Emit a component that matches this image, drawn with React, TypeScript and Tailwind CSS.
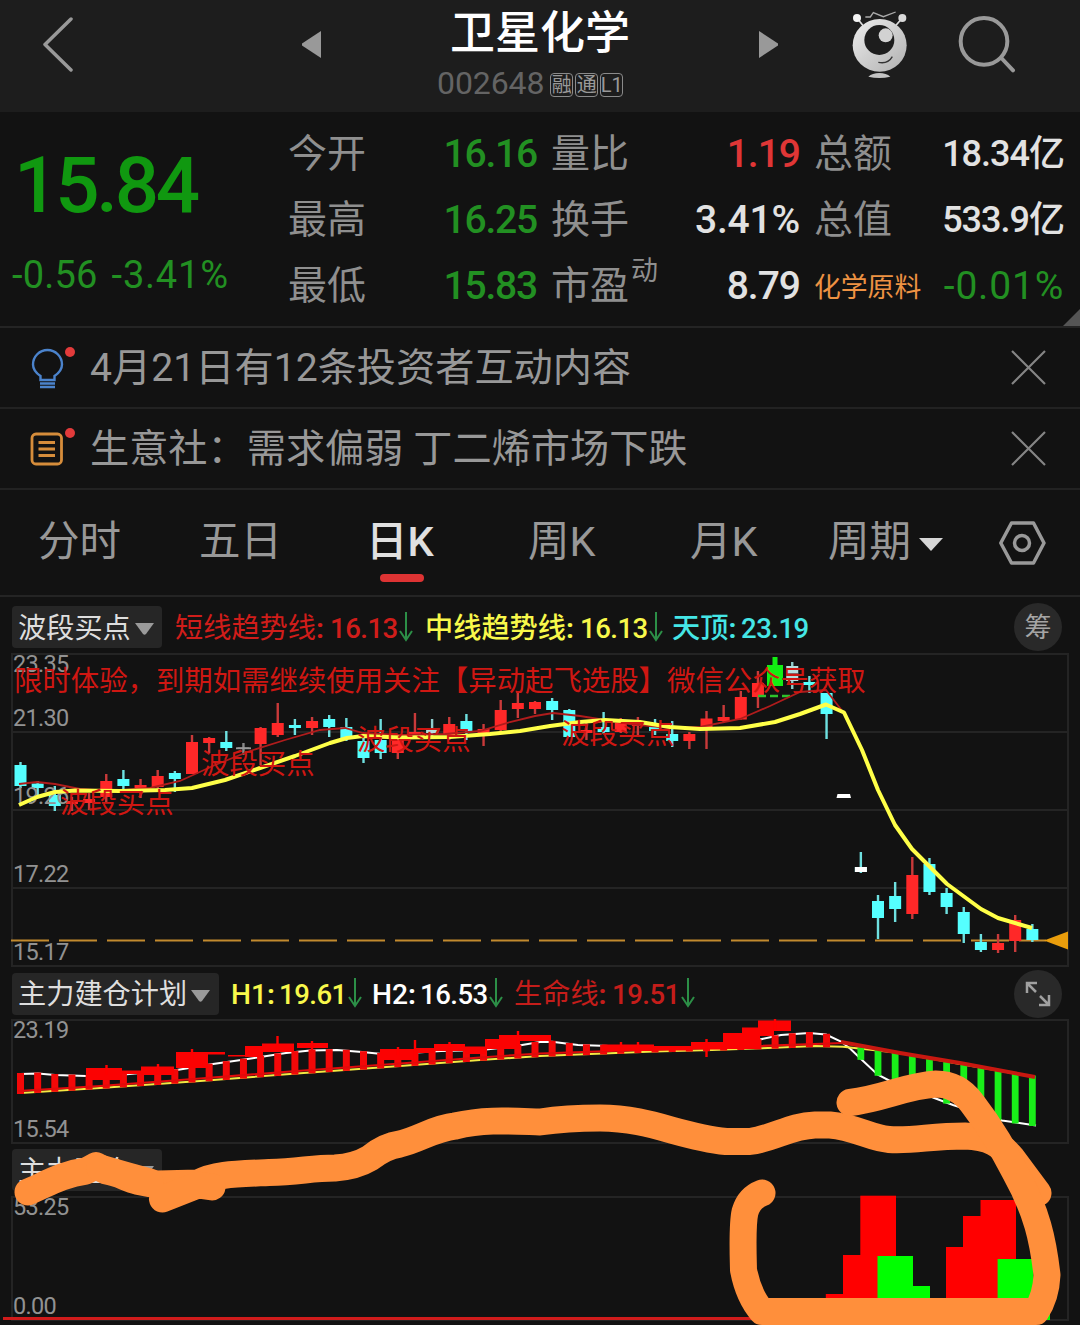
import React from "react";

type Pt = [number, number];
type Kind = "c" | "r" | "w" | "x";
type Candle = [Kind, number, number, number, number];

const STEP = 17.15;
const X0 = 20.5;

// kind, high, body top, body bottom, low
const candles: Candle[] = [
  ["c", 762, 765, 786, 788], ["c", 781, 783.5, 788, 795], ["c", 786, 795, 806, 811],
  ["r", 797, 801, 804, 811], ["r", 793, 799, 803, 810], ["r", 774, 781, 797, 802],
  ["c", 770, 779, 786, 789], ["r", 779, 785, 788, 798], ["r", 770, 776, 787, 789],
  ["c", 771, 773, 779, 792], ["r", 735, 742, 774, 774], ["r", 737, 738, 743, 753],
  ["c", 731, 742, 748, 751], ["x", 743, 747.4, 749, 755], ["r", 727, 728, 744, 765],
  ["r", 703, 723, 735, 737], ["c", 719, 725, 728, 735], ["r", 717, 721, 728, 735],
  ["c", 715, 719, 727, 737], ["c", 718, 727, 738, 741], ["c", 738, 741, 758, 763],
  ["c", 719, 740, 753, 759], ["r", 735, 740, 753, 759], ["r", 713, 732, 734, 737],
  ["w", 719, 729, 733, 737], ["r", 717, 724, 735, 740], ["c", 714, 721, 731, 740],
  ["r", 724, 729, 733, 746], ["r", 700, 710, 730, 732], ["r", 692, 703, 709, 718],
  ["r", 701, 702, 709, 714], ["c", 698, 701, 710, 720], ["c", 709, 710, 737, 737],
  ["r", 722, 730, 733, 740], ["c", 712, 727, 732, 734], ["r", 718, 723, 732, 733],
  ["r", 717, 723, 726, 737], ["c", 719, 727, 731, 735], ["c", 721, 734, 741, 747],
  ["r", 732, 734, 741, 749], ["r", 711, 718.5, 727, 749], ["r", 705, 717, 721, 723],
  ["r", 691, 697, 719.5, 719.5], ["r", 671, 683, 697, 708], ["x", 690, 690, 690, 690],
  ["w", 662, 666, 681, 689], ["c", 676, 682, 685, 693], ["c", 693, 693, 714, 739],
  ["x", 796, 796, 796, 796], ["c", 852, 867, 872, 873], ["c", 895, 901, 918, 939],
  ["c", 882, 896, 909, 922], ["r", 857, 875, 914, 919], ["c", 858, 864, 892, 895],
  ["c", 888, 893, 907, 914], ["c", 907, 912, 934, 943], ["c", 934, 942, 950, 952],
  ["r", 934, 943, 950, 953], ["r", 915, 920, 941, 952], ["c", 924, 929, 940, 942],
];

const bodyColor: Record<Kind, string> = { c: "#55ffff", r: "#ff2828", w: "#b5dede", x: "#999" };
const wickColor: Record<Kind, string> = { c: "#6ee0e0", r: "#c93a3a", w: "#8ecccc", x: "#888" };

const yellowLine = "19,805 37,797 55,792 75,790.5 120,791 165,790 192,788 225,780 260,768 295,756 330,743 347,738 363,736 400,737.5 450,737 490,734 520,731 550,726 580,722 605,720 640,722 670,727 700,729 740,728 775,722 800,714 826,704.5 844,712.5 862,750 878,790 895,825 912,849 930,867 947,884 981,909 998,918 1032,928";
const redLine = "19,784 37,782 55,784 80,789 110,791 150,788 180,781 215,765 250,751 285,740 320,730 345,728 363,733 400,735 445,734 480,731 510,722 535,716 553,713 580,716 630,724 670,728 700,727 740,719 770,706 800,692 826,690 843,712";

const upper: Pt[] = [
  [20.5, 1074], [38, 1073.5], [55, 1075], [86, 1076], [124, 1074.5], [151, 1072], [177, 1070], [213, 1064],
  [241, 1060], [286, 1053], [310, 1050.5], [337, 1050], [362, 1052], [382, 1054], [417, 1052.5], [441, 1051],
  [482, 1050], [516, 1046], [540, 1042], [552, 1041.7], [578, 1045], [609, 1046], [654, 1047.3], [719, 1047.3],
  [743, 1045], [760, 1039.5], [781, 1035], [809, 1033], [826, 1034.5], [841, 1041.5], [850, 1048.5], [861, 1059],
  [877.5, 1074.5], [891, 1081.5], [912, 1088], [933, 1097.5], [953, 1105], [1002, 1120.5], [1036, 1125.5],
];
const lower: Pt[] = [
  [20.5, 1093], [100, 1088], [200, 1081], [290, 1074], [400, 1066], [480, 1060], [540, 1056], [654, 1051.5],
  [712, 1050], [760, 1048.3], [815, 1046], [843, 1046.7], [900, 1053], [960, 1064], [1035, 1077],
];
const redTrend: Pt[] = [[841, 1042], [900, 1053], [960, 1063], [1035, 1077]];

function valueAt(line: Pt[], x: number): number {
  for (let i = 1; i < line.length; i++) {
    const [ax, ay] = line[i - 1];
    const [bx, by] = line[i];
    if (x <= bx) return ay + ((by - ay) * (x - ax)) / (bx - ax);
  }
  return line[line.length - 1][1];
}

const pts = (line: Pt[]) => line.map((p) => p.join(",")).join(" ");

// left, right, top, bottom
const redBlocks: [number, number, number, number][] = [
  [86, 122, 1068, 1080], [122, 142, 1070.5, 1074], [141, 174, 1066.5, 1075], [176, 208, 1052, 1068],
  [207, 225, 1052, 1054.5], [228, 246, 1055, 1056.5], [245, 263, 1046, 1057], [262, 294, 1043.5, 1052],
  [297, 328, 1043, 1048], [380, 418, 1049, 1060], [416, 434, 1048, 1053], [434, 465, 1044, 1051], [465, 486, 1046.5, 1054],
  [485, 520, 1039, 1049], [499, 551, 1035, 1041], [602, 654, 1044.5, 1051], [654, 692, 1046, 1050.5],
  [691, 723, 1042, 1049.5], [723, 760, 1033, 1049], [742, 760, 1027.5, 1041], [758, 791, 1020.5, 1031],
  [745, 774, 1028, 1036],
];
const spikes: [number, number, number][] = [
  [106.5, 1065, 1075], [158, 1064, 1072], [192, 1049, 1060], [277.5, 1036, 1050], [312, 1041, 1050], [398, 1047, 1055],
  [415, 1040, 1062], [449.5, 1042, 1050], [518, 1031, 1046], [621, 1042, 1048], [638, 1042, 1048],
  [706.5, 1039, 1057], [775, 1019, 1030],
];

const volumeBars: [number, number, number, string][] = [
  [825.8, 843.5, 1294, "#f00"], [843, 861, 1255, "#f00"], [860.3, 896, 1195.7, "#f00"],
  [877.5, 913, 1256, "#0f0"], [912.5, 930, 1286, "#0f0"], [946, 964, 1247, "#f00"],
  [963, 981, 1216, "#f00"], [980.5, 1016, 1200, "#f00"], [997.6, 1050, 1259, "#0f0"],
];

const FONT = "font-['Roboto','Noto_Sans_CJK_SC',sans-serif]";

function Down() {
  return (
    <svg className="block shrink-0" width="14" height="30" viewBox="0 0 14 30" fill="none" stroke="#2c8f47" strokeWidth="2">
      <path d="M7 0V28M1 19L7 28L13 19" />
    </svg>
  );
}

function Picker({ label, width }: { label: string; width: string }) {
  return (
    <div className={`flex h-[42px] shrink-0 items-center rounded bg-[#262626] pl-1.5 text-[28.2px] leading-none text-[#dedede] ${width}`}>
      <span className="whitespace-nowrap pt-1">{label}</span>
      <svg className="ml-1 mt-1 shrink-0" width="19" height="12" viewBox="0 0 19 12"><path d="M0 0H19L11 11Q9.500 12.500 8 11Z" fill="#9a9a9a" /></svg>
    </div>
  );
}

function Reading({ label, labelWidth, value, cell, arrow }: { label: string; labelWidth: string; value: string; cell: string; arrow: boolean }) {
  return (
    <div className={`flex shrink-0 items-center whitespace-nowrap text-[28.2px] leading-none ${cell}`}>
      <span className={`pt-1 ${labelWidth}`}>{label}<b className="font-bold">:</b></span>
      <span className="mr-px pt-[3px] text-[27.500px] font-medium tracking-[-0.5px]">{value}</span>
      {arrow && <Down />}
    </div>
  );
}

function Stat({ label, value, color, sup }: { label: string; value: string; color: string; sup?: string }) {
  return (
    <div className="flex h-[66px] items-center justify-between whitespace-nowrap text-[39px] leading-none">
      <span className="-ml-px text-[#8f8f8f]">
        {label}
        {sup && <span className="relative -top-[19px] ml-0.5 text-[27px]">{sup}</span>}
      </span>
      <span className={color}>{value}</span>
    </div>
  );
}

function Notice({ children, text }: { children: React.ReactNode; text: string }) {
  return (
    <div className="flex h-[81px] items-center border-b-2 border-[#222] pl-[28px] pr-[34px]">
      {children}
      <span className="ml-[14px] grow whitespace-pre pt-0.5 text-[39.200px] leading-none text-[#989898]">{text}</span>
      <svg width="35" height="35" viewBox="0 0 35 35" stroke="#858585" strokeWidth="2.2"><path d="M1 1L34 34M34 1L1 34" /></svg>
    </div>
  );
}

function AxisText({ y, children }: { y: number; children: string }) {
  return <text x="13" y={y} fill="#929292" fontSize="23.500" letterSpacing="-0.7">{children}</text>;
}

function PriceChart() {
  return (
    <svg className="block shrink-0 overflow-visible" width="1080" height="315" viewBox="0 653 1080 315">
      <g stroke="#242424" strokeWidth="2" fill="none">
        <path d="M12 654H1068V966H12ZM12 732H1068M12 810H1068M12 888H1068" />
      </g>
      <path d="M11 940.500H1046" stroke="#c28a2e" strokeWidth="2" strokeDasharray="38 10" />
      {candles.map(([k, hi, top, bot, lo], i) => {
        const x = X0 + STEP * i;
        return (
          <g key={i}>
            <rect x={x - 1.2} y={hi} width="2.400" height={lo - hi} fill={wickColor[k]} />
            <rect x={x - 6} y={top} width="12" height={bot - top} fill={bodyColor[k]} />
          </g>
        );
      })}
      <path d="M236 748.300H251" stroke="#999" strokeWidth="1.800" />
      <path d="M772.500 657H777.500V665H783V686H767V665H772.500Z" fill="#12ee12" />
      <path d="M837.500 794H850L851 798H836.500Z" fill="#fff" />
      <rect x="854.900" y="867" width="12" height="5" fill="#fff" />
      <path d="M758 696H790" stroke="#2cc42c" strokeWidth="2.500" strokeDasharray="8 4" />
      <path d="M787 669H798M787 674H798" stroke="#7a3a3a" strokeWidth="1.500" />
      <AxisText y={672}>23.35</AxisText>
      <AxisText y={726}>21.30</AxisText>
      <AxisText y={804}>19.26</AxisText>
      <AxisText y={882}>17.22</AxisText>
      <AxisText y={960}>15.17</AxisText>
      <polyline points={redLine} fill="none" stroke="#b01c1c" strokeWidth="1.800" />
      <polyline points={yellowLine} fill="none" stroke="#ffff48" strokeWidth="4" strokeLinejoin="round" />
      <path d="M1044 940.500L1068 931.500V949.500Z" fill="#e99d0c" />
      <g fill="#cf1712" fontSize="28.400">
        <text x="14" y="690.500">限时体验，到期如需继续使用关注【异动起飞选股】微信公众号获取</text>
        <text x="60" y="812.500">波段买点</text>
        <text x="201" y="773.500">波段买点</text>
        <text x="357" y="749.500">波段买点</text>
        <text x="561" y="743.500">波段买点</text>
      </g>
    </svg>
  );
}

function PlanChart() {
  const idx = Array.from({ length: 60 }, (_, i) => i);
  return (
    <svg className="block shrink-0 overflow-visible" width="1080" height="126" viewBox="0 1019 1080 126">
      <path d="M12 1020H1068V1143H12Z" stroke="#242424" strokeWidth="2" fill="none" />
      <polyline points={pts(upper)} fill="none" stroke="#fff" strokeWidth="2" />
      <polyline points={pts(lower)} fill="none" stroke="#f4e842" strokeWidth="2" />
      {idx.map((i) => {
        const x = X0 + STEP * i;
        const a = valueAt(upper, x);
        const b = valueAt(lower, x);
        if (i === 48) return null;
        return i < 48 ? (
          <rect key={i} x={x - 3.5} y={a - 1} width="7" height={b - a + 2} fill="#f30808" />
        ) : (
          <rect key={i} x={x - 3.4} y={b - 1} width="6.800" height={a - b + 2} fill="#19ee19" />
        );
      })}
      <polyline points="18,1091 100,1086 200,1078.500 290,1071.500 400,1063.500 480,1057.500 540,1053.500 654,1049.500 760,1046 843,1043" fill="none" stroke="#e00b0b" strokeWidth="2.200" />
      {redBlocks.map(([l, r, t, b], i) => <rect key={i} x={l} y={t} width={r - l} height={b - t} fill="#fb0202" />)}
      {spikes.map(([x, t, b], i) => <rect key={i} x={x - 1.2} y={t} width="2.400" height={b - t} fill="#f00" />)}
      <polyline points={pts(redTrend)} fill="none" stroke="#c81810" strokeWidth="4" />
      <AxisText y={1038}>23.19</AxisText>
      <AxisText y={1137}>15.54</AxisText>
    </svg>
  );
}

function VolumeChart() {
  return (
    <svg className="block shrink-0 overflow-visible" width="1080" height="130" viewBox="0 1195 1080 130">
      <path d="M12 1197H1068V1320H12Z" stroke="#242424" strokeWidth="2" fill="none" />
      <path d="M3 1318.500H1050" stroke="#d01b1b" strokeWidth="3" />
      {volumeBars.map(([l, r, t, fill], i) => <rect key={i} x={l} y={t} width={r - l} height={1320 - t} fill={fill} />)}
      <rect x="1033.500" y="1240" width="18" height="70" fill="#121212" />
      <AxisText y={1215}>53.25</AxisText>
      <AxisText y={1314}>0.00</AxisText>
    </svg>
  );
}

/* Freehand marker strokes drawn over the two lower charts. */
function Marker() {
  return (
    <svg className="pointer-events-none absolute inset-0" width="1080" height="1325" viewBox="0 0 1080 1325" fill="none" stroke="#ff8f3b" strokeWidth="27" strokeLinecap="round" strokeLinejoin="round">
      <path d="M28 1192C45 1185 62 1174 86 1171L96 1165.500L106 1171C125 1174 130 1183 158 1184L198 1183C215 1174 235 1174 269 1172.500C300 1172 310 1168 335 1168C350 1167 360 1164 370 1158Q385 1146 400 1144C420 1139 435 1128 455 1126C485 1119 510 1121 540 1122C560 1119 575 1118 600 1118C650 1118 680 1137 726 1141.500H750C775 1138 790 1126 815 1125H830C855 1127 870 1138 889 1139.500C915 1141 930 1136 965 1136C990 1137 1000 1144 1012 1158L1038 1193" />
      <path d="M100 1168L128 1176L150 1182M162.500 1199L198 1185L212 1187" />
      <path d="M850 1102.500C885 1098 905 1086 936 1084Q958 1084 972 1103C993 1130 1005 1153 1016 1174C1037 1212 1043 1240 1047 1275Q1046 1297 1036 1311.500H762C751 1299 746 1283 743.500 1270C743 1250 742 1225 745 1212Q749 1198 762 1193" />
    </svg>
  );
}

export default function App() {
  return (
    <div className={`relative flex h-[1325px] w-[1080px] flex-col overflow-hidden bg-[#121212] ${FONT}`}>
      <header className="flex h-[112px] shrink-0 bg-[#1d1d1d] pl-[43px]">
        <svg className="mt-[17px] shrink-0" width="31" height="55" viewBox="0 0 31 55" fill="none" stroke="#999" strokeWidth="3.500" strokeLinecap="round" strokeLinejoin="round"><path d="M28 2L2 27.500L28 53" /></svg>
        <svg className="ml-[228px] mt-[31px] shrink-0" width="19" height="27" viewBox="0 0 19 27"><path d="M19 0V27L0 14.500Q-.5 13.500 0 12.500Z" fill="#999" /></svg>
        <div className="w-[438px] shrink-0">
          <h1 className="mt-[11px] text-center text-[45px] font-medium leading-[46px] text-white">卫星化学</h1>
          <div className="mt-[10px] flex items-center gap-0.5 pl-[116px] leading-none">
            <span className="mr-1 text-[32px] tracking-[-0.1px] text-[#646464]">002648</span>
            {["融", "通", "L1"].map((t) => (
              <span key={t} className="mt-1 flex h-6 w-[23px] items-center justify-center rounded-sm border border-[#8a8a8a] text-[20px] text-[#999]">{t}</span>
            ))}
          </div>
        </div>
        <svg className="mt-[31px] shrink-0" width="19" height="27" viewBox="0 0 19 27"><path d="M0 0V27L19 14.500Q19.500 13.500 19 12.500Z" fill="#999" /></svg>
        <svg className="ml-[72px] mt-[8px] shrink-0" width="60" height="72" viewBox="60 24 180 216" fill="none">
          <defs><linearGradient id="face" x1="0" y1="0" x2="1" y2="1"><stop stopColor="#ededed" /><stop offset="1" stopColor="#b0b0b0" /></linearGradient></defs>
          <path d="M106 51H121L130 38L160 50L197 36" stroke="#aaa" strokeWidth="4" />
          <path d="M81 54L100 78M217 54L196 78" stroke="#ddd" strokeWidth="5" />
          <circle cx="81" cy="54" r="12" fill="#f4f4f4" /><circle cx="217" cy="54" r="12" fill="#d9d9d9" />
          <ellipse cx="149" cy="136" rx="81" ry="79" fill="url(#face)" />
          <circle cx="148" cy="120" r="45" fill="#1d1d1d" />
          <circle cx="167" cy="106" r="21" fill="#d2d2d2" />
          <path d="M145 187Q174 193 187 170" stroke="#333" strokeWidth="4" />
          <path d="M115 230Q127 219 148 219T181 230Q148 238 115 230Z" fill="#c4c4c4" />
        </svg>
        <svg className="ml-[47px] mt-[13px] shrink-0" width="60" height="60" viewBox="380 40 180 180" fill="none" stroke="#999" strokeWidth="12" strokeLinecap="round"><circle cx="461" cy="125" r="70" /><path d="M513 175L548 212" /></svg>
      </header>

      <section className="relative flex h-[216px] shrink-0 border-b-2 border-[#242424] pr-4">
        <div className="w-[289px] shrink-0 whitespace-nowrap text-[#109810]">
          <div className="mt-[35px] pl-[14px] text-[78px] font-medium leading-[78px] tracking-[-3.200px]">15.84</div>
          <div className="mt-[30px] flex gap-[14px] pl-[12px] text-[38px] leading-[40px] tracking-[0.200px] text-[#229022]"><span>-0.56</span><span className="tracking-[0.800px]">-3.41%</span></div>
        </div>
        <div className="grid grow grid-cols-[248px_248px_249px] content-start gap-x-[15px] pt-[9px]">
          <Stat label="今开" value="16.16" color="text-[#229022] font-medium tracking-[-1.200px]" />
          <Stat label="量比" value="1.19" color="text-[#e03636] font-medium tracking-[-1px]" />
          <Stat label="总额" value="18.34亿" color="text-[#e2e2e2] text-[36px] font-medium tracking-[-1px]" />
          <Stat label="最高" value="16.25" color="text-[#229022] font-medium tracking-[-1.200px]" />
          <Stat label="换手" value="3.41%" color="text-[#e2e2e2] font-medium tracking-[-0.200px]" />
          <Stat label="总值" value="533.9亿" color="text-[#e2e2e2] text-[36px] font-medium tracking-[-1px]" />
          <Stat label="最低" value="15.83" color="text-[#229022] font-medium tracking-[-1.200px]" />
          <Stat label="市盈" sup="动" value="8.79" color="text-[#e2e2e2] font-medium tracking-[-1px]" />
          <div className="flex h-[66px] items-center justify-between whitespace-nowrap leading-none">
            <span className="-ml-px pt-1 text-[26.800px] text-[#ee9243]">化学原料</span>
            <span className="text-[39px] tracking-[0.800px] text-[#229022]">-0.01%</span>
          </div>
        </div>
        <svg className="absolute bottom-0 right-0" width="17" height="17" viewBox="0 0 17 17"><path d="M17 0V17H0Z" fill="#555" /></svg>
      </section>

      <Notice text="4月21日有12条投资者互动内容">
        <svg className="shrink-0" width="48" height="44" viewBox="0 0 48 44" fill="none" stroke="#4b83cc" strokeWidth="2.400">
          <path d="M12.500 34V30Q5 25 5 18.500A14.500 14.500 0 0 1 34 18.500Q34 25 26.500 30V34ZM12 37.500H27M12 41H27" />
          <circle cx="42" cy="6" r="5" fill="#e23b3b" stroke="none" />
        </svg>
      </Notice>
      <Notice text="生意社：需求偏弱 丁二烯市场下跌">
        <svg className="shrink-0" width="48" height="44" viewBox="0 0 48 44" fill="none" stroke="#d68d3b" strokeWidth="2.800">
          <rect x="4" y="7" width="29.500" height="30" rx="4" /><path d="M10.500 15.500H27M10.500 22H27M10.500 28.500H27" />
          <circle cx="42" cy="6" r="5" fill="#e23b3b" stroke="none" />
        </svg>
      </Notice>

      <nav className="grid h-[107px] shrink-0 grid-cols-[161px_169px_160px_162px_138px_171px_48px] border-b-2 border-[#242424] pl-[38px] pt-[31px] text-[41.500px] leading-[41px] text-[#989898]">
        <span>分时</span>
        <span>五日</span>
        <div className="-ml-0.5 font-medium text-[#e0e0e0]">日K<div className="ml-[14px] mt-[12px] h-2 w-[44px] rounded-full bg-[#dd3333]" /></div>
        <span>周K</span>
        <span>月K</span>
        <div className="flex h-[41px] items-center">周期<svg className="ml-[8px] mt-1.5" width="24" height="13" viewBox="0 0 24 13"><path d="M0 0H24L12 13Z" fill="#d6d6d6" /></svg></div>
        <svg width="48" height="44" viewBox="0 0 48 44" fill="none" stroke="#999" strokeWidth="3.500" strokeLinejoin="round"><path d="M12.500 2H34.500L45 22L34.500 42H12.500L1.800 22Z" /><circle cx="23" cy="22" r="7.500" /></svg>
      </nav>

      <div className="flex h-[56px] shrink-0 items-center pb-px pl-3 pr-[18px] pt-[5px]">
        <Picker label="波段买点" width="w-[150px]" />
        <Reading label="短线趋势线" labelWidth="w-[155px]" value="16.13" cell="ml-[13px] w-[250px] text-[#d01d1a]" arrow />
        <Reading label="中线趋势线" labelWidth="w-[155px]" value="16.13" cell="w-[247px] text-[#f8f84b] font-medium" arrow />
        <Reading label="天顶" labelWidth="w-[69px]" value="23.19" cell="grow text-[#45e6e6] font-medium" arrow={false} />
        <div className="flex h-12 w-12 items-center justify-center rounded-full bg-[#292929] pt-0.5 text-[27px] text-[#a5a5a5]">筹</div>
      </div>
      <PriceChart />
      <div className="flex h-[51px] shrink-0 items-center pl-3 pr-[18px]">
        <Picker label="主力建仓计划" width="w-[207px]" />
        <Reading label="H1" labelWidth="w-[48px]" value="19.61" cell="ml-[12px] w-[141px] text-[#f8f84b] font-medium" arrow />
        <Reading label="H2" labelWidth="w-[48px]" value="16.53" cell="w-[142px] text-white font-medium" arrow />
        <Reading label="生命线" labelWidth="w-[98px]" value="19.51" cell="grow text-[#c41d1a]" arrow />
        <div className="flex h-12 w-12 items-center justify-center rounded-full bg-[#292929]">
          <svg width="26" height="26" viewBox="0 0 26 26" fill="none" stroke="#a0a0a0" strokeWidth="2.500"><path d="M2 12V2H12M2 2L11 11M24 14V24H14M24 24L15 15" /></svg>
        </div>
      </div>
      <PlanChart />
      <div className="flex h-[50px] shrink-0 items-center pl-3">
        <Picker label="主力建仓" width="w-[150px]" />
      </div>
      <VolumeChart />
      <Marker />
    </div>
  );
}
